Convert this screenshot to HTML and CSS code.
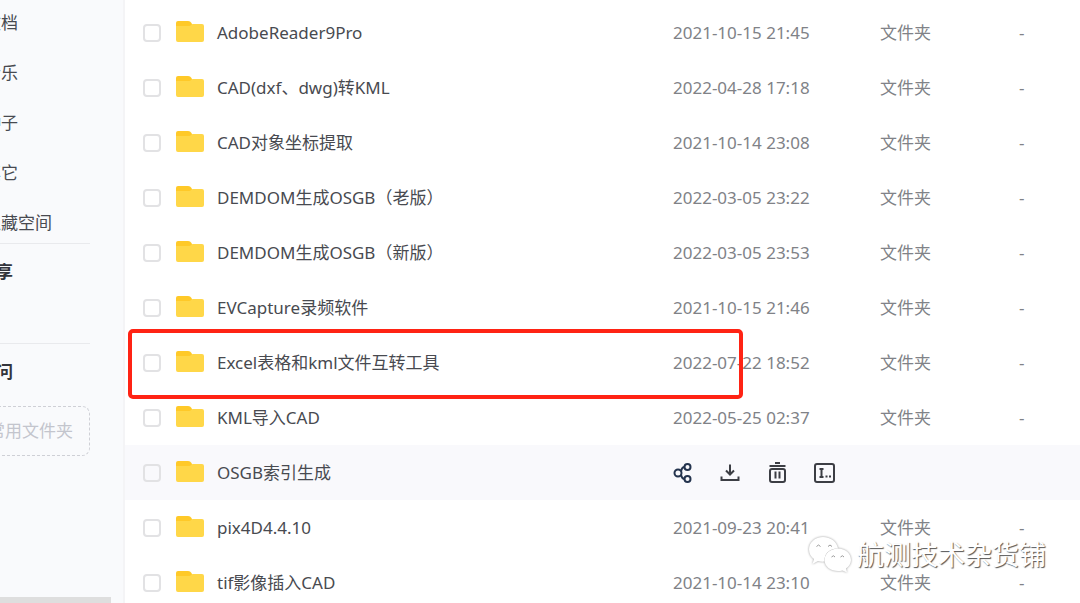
FILE: index.html
```
<!DOCTYPE html>
<html lang="zh-CN">
<head>
  <meta charset="utf-8">
  <title>我的网盘</title>
  <link rel="stylesheet" href="styles.css">
</head>
<body>
  <aside class="sidebar">
    <nav class="menu">
      <ul class="menu-list">
        <li><a href="#">文档</a></li>
        <li><a href="#">音乐</a></li>
        <li><a href="#">种子</a></li>
        <li><a href="#">其它</a></li>
        <li><a href="#">隐藏空间</a></li>
      </ul>
      <h2 class="menu-title share">分享</h2>
      <h2 class="menu-title">快捷访问</h2>
      <div class="drop-box">拖入常用文件夹</div>
    </nav>
    <div class="scrollbar"></div>
  </aside>

  <main class="content">
    <table class="files">
      <colgroup>
        <col class="col-check">
        <col class="col-name">
        <col class="col-date">
        <col class="col-type">
        <col class="col-size">
      </colgroup>
      <tbody id="fileRows"></tbody>
    </table>
    <div class="mark"></div>
  </main>

  <div class="watermark">
    <svg width="44" height="38" viewBox="0 0 44 38">
      <path d="M16 2C8 2 2 7.500 2 14.500c0 4 2 7.500 5 9.500l-1.500 5 5.500-3c2 .6 4 .8 6.500.6C17 19 22 13.500 31 13.500 30 7 24 2 16 2z"/>
      <path d="M31 13.500c-7.500 0-13.500 5-13.500 11.500S23.500 36 31 36c1.500 0 3-.2 4.500-.6L40 37.500l-1-4c3-2 5-5 5-8.500 0-6.500-5.500-11.500-13-11.500z"/>
      <path class="eye" d="M9.500 11.500q2-3 4 0M21 11.500q2-3 4 0M24.500 22q2-2.500 3.500 0M33.500 22q2-2.500 3.500 0"/>
    </svg>
    <span>航测技术杂货铺</span>
  </div>

  <script>
    const files = [
      ["AdobeReader9Pro", "2021-10-15 21:45"],
      ["CAD(dxf、dwg)转KML", "2022-04-28 17:18"],
      ["CAD对象坐标提取", "2021-10-14 23:08"],
      ["DEMDOM生成OSGB（老版）", "2022-03-05 23:22"],
      ["DEMDOM生成OSGB（新版）", "2022-03-05 23:53"],
      ["EVCapture录频软件", "2021-10-15 21:46"],
      ["Excel表格和kml文件互转工具", "2022-07-22 18:52"],
      ["KML导入CAD", "2022-05-25 02:37"],
      ["OSGB索引生成", ""],
      ["pix4D4.4.10", "2021-09-23 20:41"],
      ["tif影像插入CAD", "2021-10-14 23:10"]
    ];

    const folder = `<svg class="folder" width="28" height="24" viewBox="0 0 28 24">
      <path fill="#ffc928" d="M2 0h10c2 0 3 1 4 3v6H0V2Q0 0 2 0z"/>
      <path fill="#ffd748" d="M0 5h13c2 0 2-2 4-2h9q2 0 2 2v14q0 2-2 2H2q-2 0-2-2z"/>
    </svg>`;

    const actions = `<div class="actions">
      <button type="button" aria-label="分享"><svg width="22" height="22" viewBox="0 0 22 22" stroke="#24344e">
        <circle cx="5" cy="11" r="3.500"/><circle cx="14.500" cy="5" r="3"/><circle cx="14.500" cy="17" r="3"/>
        <path d="M8 9q1-4 3.500-4M8 13q1 4 3.500 4"/></svg></button>
      <button type="button" aria-label="下载"><svg width="22" height="22" viewBox="0 0 22 22">
        <path d="M10 2.500v10M6 8.500l4 4 4-4M1.500 14.500V18h17v-3.500"/></svg></button>
      <button type="button" aria-label="删除"><svg width="22" height="22" viewBox="0 0 22 22">
        <path d="M8 1h5M2.500 4h16M8.500 9.500v7M12.500 9.500v7"/><rect x="3" y="7" width="15" height="13" rx="2"/></svg></button>
      <button type="button" aria-label="重命名"><svg width="22" height="22" viewBox="0 0 22 22">
        <rect x="1" y="2" width="19" height="18" rx="2"/><path d="M5.500 7h4M7.500 7v8M5.500 15h4M11.500 14.500h2M15 14.500h2"/></svg></button>
    </div>`;

    let rows = "";

    for (let i = 0; i < files.length; i++) {
      const name = files[i][0];
      const date = files[i][1];

      rows += date ? "<tr>" : `<tr class="hover">`;
      rows += `<td><input type="checkbox" id="file${i}"></td>`;
      rows += `<td><label class="name" for="file${i}">${folder}<span>${name}</span></label></td>`;
      if (date) {
        rows += `<td>${date}</td><td>文件夹</td><td>-</td>`;
      } else {
        rows += `<td colspan="3">${actions}</td>`;
      }
      rows += "</tr>";
    }

    document.getElementById("fileRows").innerHTML = rows;
  </script>
</body>
</html>
```
FILE: styles.css
```
* {
  box-sizing: border-box;
  margin: 0;
  padding: 0;
}
body {
  display: flex;
  height: 100vh;
  overflow: hidden;
  background-color: #fff;
  color: #484a50;
  font-family: "Noto Sans", "Noto Sans CJK SC", sans-serif;
  font-size: 17px;
  line-height: 24px;
}
.sidebar {
  display: flex;
  flex-direction: column;
  justify-content: space-between;
  flex: none;
  width: 125px;
  overflow: hidden;
  background-color: #f9fafc;
  border-right: 2px solid #f4f4f6;
  font-family: "Noto Sans CJK SC", sans-serif;
}
/* the menu is scrolled a little to the right */
.menu {
  margin-left: -55px;
  margin-right: 33px;
  white-space: nowrap;
}
.menu-list {
  list-style: none;
  padding-bottom: 23px;
  border-bottom: 1px solid #e9eaed;
}
.menu-list li {
  height: 50px;
  padding-left: 39px;
  line-height: 44px;
}
.menu-list li:last-child {
  height: 20px;
}
.menu-list a {
  color: #484a50;
  text-decoration: none;
}
.menu-title {
  color: #33353c;
  font-size: 17px;
  line-height: 54px;
}
.share {
  height: 100px;
  padding-left: 34px;
  border-bottom: 1px solid #e9eaed;
}
.drop-box {
  height: 50px;
  margin-top: 8px;
  padding-right: 16px;
  border: 1px dashed #cfd0d6;
  border-radius: 8px;
  color: #c3c5cd;
  line-height: 46px;
  direction: rtl;
}
.scrollbar {
  width: 111px;
  height: 6px;
  background-color: #dedede;
}
.content {
  position: relative;
  flex: 1;
  padding-top: 5px;
}
.files {
  width: 100%;
  border-collapse: collapse;
  table-layout: fixed;
}
.files tr {
  height: 55px;
}
.files td {
  color: #808287;
  vertical-align: middle;
}
.files .hover {
  background-color: #f9f9fc;
}
.col-check {
  width: 51px;
}
.col-date {
  width: 207px;
}
.col-type {
  width: 139px;
}
.col-size {
  width: 61px;
}
.files input {
  display: block;
  appearance: none;
  width: 18px;
  height: 18px;
  margin-left: 18px;
  border: 2px solid #e2e2e4;
  border-radius: 4px;
}
.name {
  display: flex;
  align-items: center;
  gap: 13px;
  color: #484a50;
}
.actions {
  display: flex;
  gap: 25px;
}
.actions button {
  width: 22px;
  height: 22px;
  border: none;
  background: none;
  cursor: pointer;
}
.actions svg {
  display: block;
  fill: none;
  stroke-width: 2;
}
.actions button + button svg {
  stroke: #3c3e44;
}
.mark {
  position: absolute;
  top: 329px;
  left: 3px;
  width: 615px;
  height: 70px;
  border: 4px solid #ff2314;
  border-radius: 5px;
  pointer-events: none;
}
.watermark {
  position: absolute;
  right: 34px;
  bottom: 30px;
  display: flex;
  align-items: center;
  gap: 6px;
  color: #fff;
  font-family: "Noto Sans CJK SC", sans-serif;
  font-size: 27px;
  line-height: 38px;
  text-shadow: 1px 1px 1px #555;
}
.watermark svg {
  fill: #fff;
  filter: drop-shadow(0 0 1px #999);
}
.watermark .eye {
  fill: none;
  stroke: #999;
}
```
